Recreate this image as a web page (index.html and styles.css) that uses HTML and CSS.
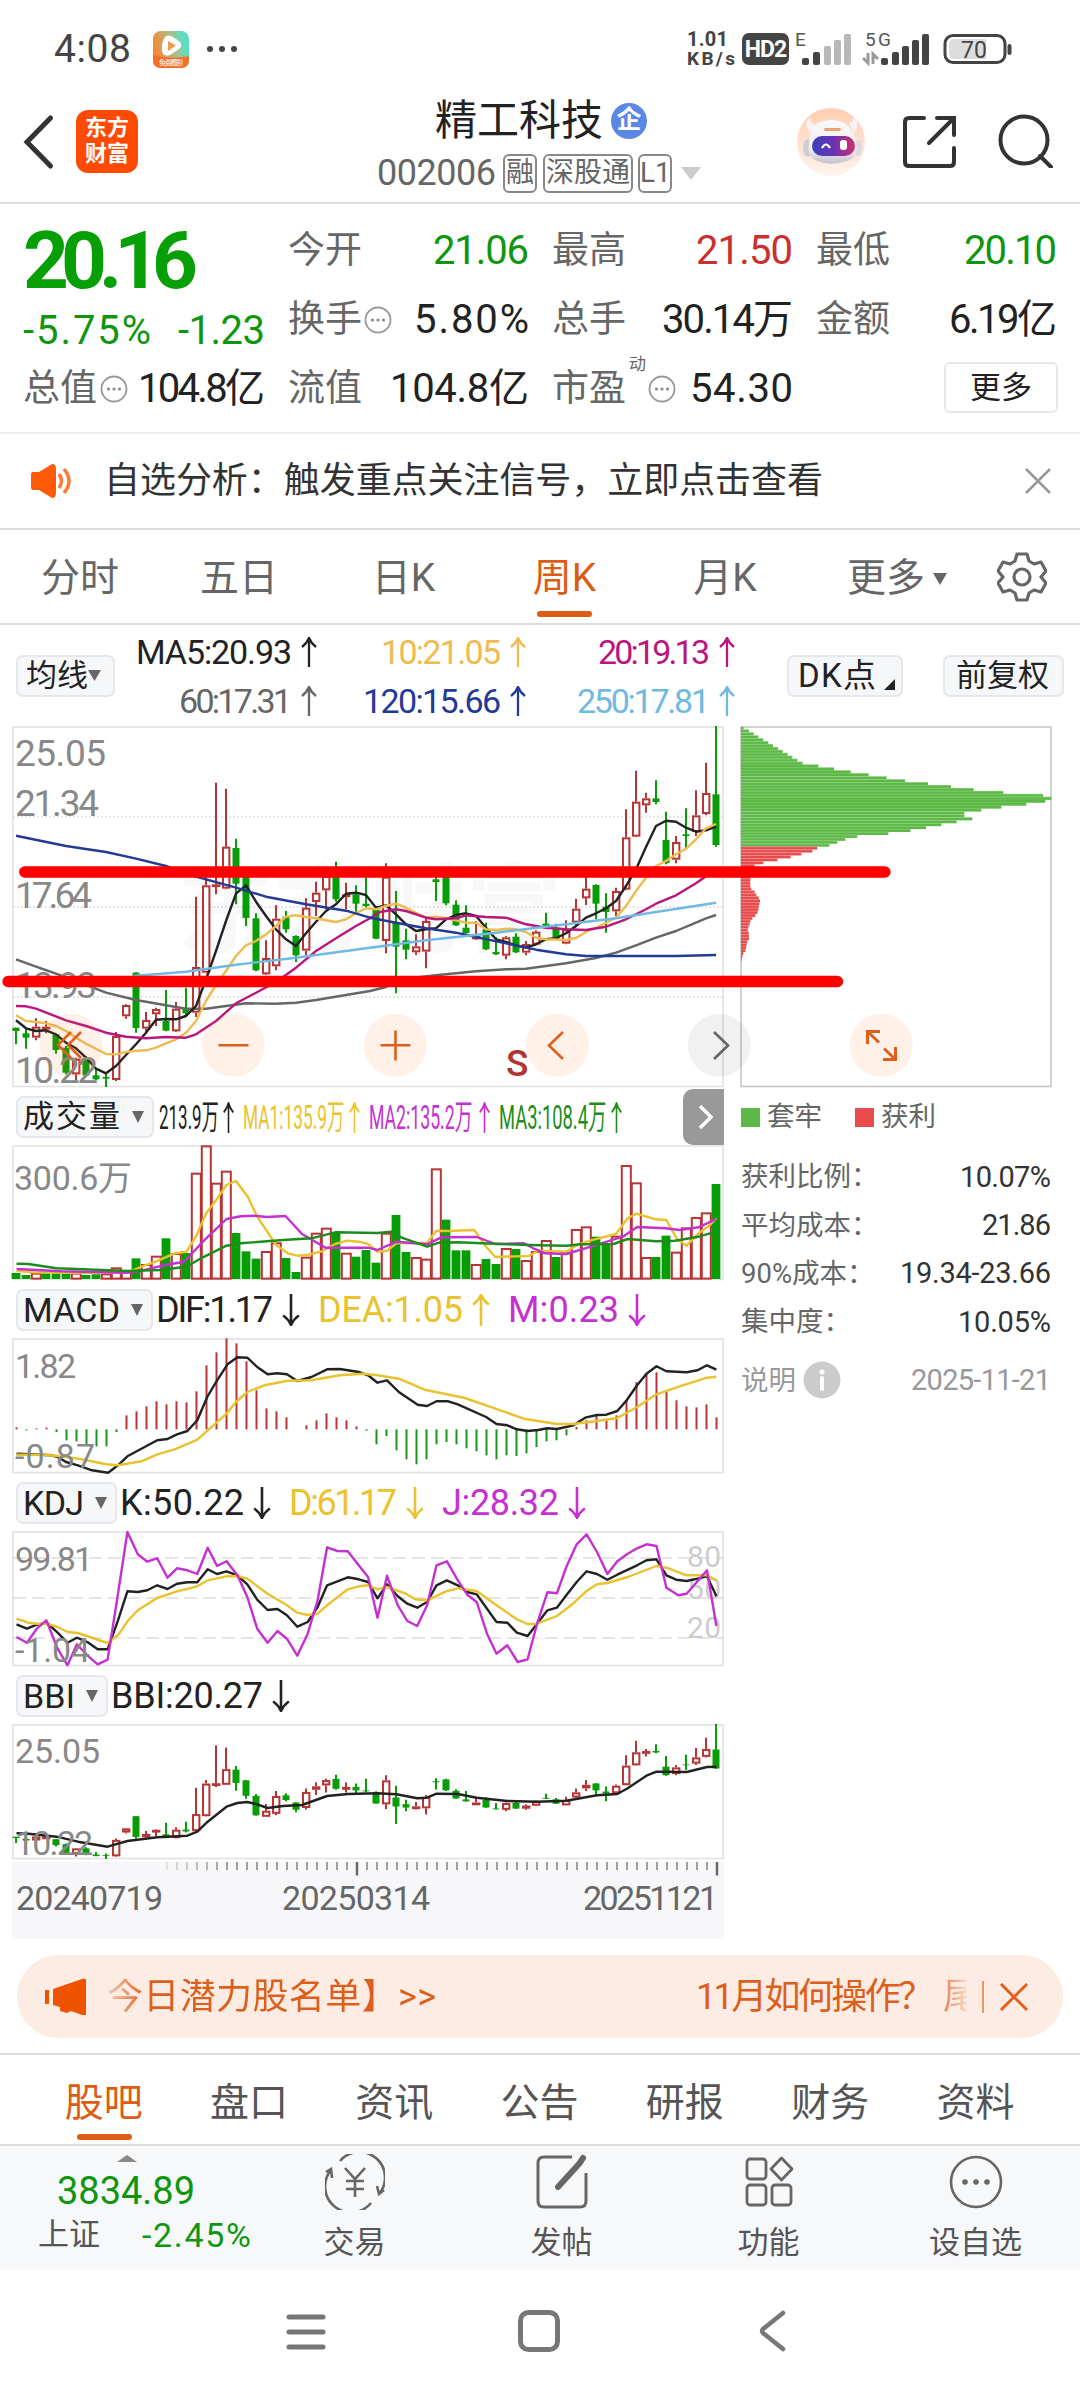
FILE: index.html
```html
<!DOCTYPE html>
<html lang="zh-CN">
<head>
<meta charset="utf-8">
<title>精工科技 002006</title>
<link rel="stylesheet" href="styles.css">
</head>
<body>
<svg class="defs" width="0" height="0">
  <symbol id="up" viewBox="0 0 16 30" preserveAspectRatio="none"><path d="M8 30V1M1 10Q6 6 8 1Q10 6 15 10" fill="none" stroke="currentColor" stroke-width="2.300"/></symbol>
  <symbol id="down" viewBox="0 0 16 30" preserveAspectRatio="none"><path d="M8 0V29M1 20Q6 24 8 29Q10 24 15 20" fill="none" stroke="currentColor" stroke-width="2.300"/></symbol>
  <symbol id="dots" viewBox="0 0 28 28"><circle cx="14" cy="14" r="12.5" fill="none" stroke="#999" stroke-width="1.8"/><g fill="#888"><circle cx="8.5" cy="14" r="1.6"/><circle cx="14" cy="14" r="1.6"/><circle cx="19.5" cy="14" r="1.6"/></g></symbol>
</svg>

<header class="status">
  <span class="clock" data-w="77">4:08</span>
  <svg class="app" width="36" height="37" viewBox="0 0 36 37"><defs><linearGradient id="ag" x1="0" y1=".6" x2="1" y2=".3"><stop offset=".1" stop-color="#f5893c"/><stop offset=".6" stop-color="#a9c08b"/><stop offset=".85" stop-color="#5fdcc0"/></linearGradient></defs><rect width="36" height="37" rx="8" fill="url(#ag)"/><path d="M0 24Q18 29 36 25V29Q36 37 28 37H8Q0 37 0 29Z" fill="#f0702a"/><path d="M12 6Q15 3 20 6L27 11Q30 15 26 18L17 24Q10 26 9 20Q8 12 12 6Z" fill="#fff"/><path d="M15 10L23 14.500L15 20Z" fill="#f29a4a"/><text x="6" y="34" font-size="7" fill="#fff" textLength="24">免费看剧</text></svg>
  <svg class="more" width="32" height="8"><g fill="#444"><circle cx="4" cy="4" r="3"/><circle cx="16" cy="4" r="3"/><circle cx="28" cy="4" r="3"/></g></svg>
  <div class="speed"><span data-w="41">1.01</span><span class="kbs" data-w="48">KB/s</span></div>
  <span class="hd">HD2</span>
  <svg class="signals" width="220" height="60" viewBox="795 19 220 60">
    <text x="795" y="46" font-size="19" fill="#555">E</text>
    <g fill="#444"><rect x="802" y="58" width="7" height="7" rx="2"/><rect x="813" y="52" width="7" height="13" rx="2"/></g>
    <g fill="#b8b8b8"><rect x="824" y="46" width="7" height="19" rx="2"/><rect x="834" y="40" width="7" height="25" rx="2"/><rect x="844" y="34" width="7" height="31" rx="2"/></g>
    <text x="865" y="46" font-size="19" fill="#555" textLength="26">5G</text>
    <path d="M863 58L868 63V53M873 64V54L878 59" stroke="#999" stroke-width="3" fill="none"/>
    <g fill="#444"><rect x="881" y="58" width="7" height="7" rx="2"/><rect x="892" y="52" width="7" height="13" rx="2"/><rect x="902" y="46" width="7" height="19" rx="2"/><rect x="912" y="40" width="7" height="25" rx="2"/><rect x="922" y="34" width="7" height="31" rx="2"/></g>
    <rect x="945" y="35.500" width="60" height="27" rx="8" fill="#fff" stroke="#444" stroke-width="3"/><path d="M954 39H986V59H954Q949 59 949 54V44Q949 39 954 39Z" fill="#ddd"/><rect x="1007.500" y="44" width="4" height="11" rx="2" fill="#444"/>
    <text x="961" y="58" font-size="23" fill="#444" textLength="26">70</text>
  </svg>
</header>

<nav class="title-bar">
  <svg class="back" width="32" height="56"><path d="M27.500 4L4 28L27.500 52" fill="none" stroke="#333" stroke-width="5" stroke-linecap="round"/></svg>
  <div class="logo">东方<br>财富</div>
  <div class="stock">
    <div class="name"><span data-w="168">精工科技</span><i>企</i></div>
    <div class="code"><span data-w="119">002006</span><b class="t1">融</b><b class="t2">深股通</b><b class="t3">L1</b><svg width="20" height="14"><path d="M0 1H20L10 14Z" fill="#ccc"/></svg></div>
  </div>
  <svg class="robot" width="68" height="68" viewBox="0 0 68 68"><defs><linearGradient id="rg" x2="0" y2="1"><stop stop-color="#ffcdb2"/><stop offset="1" stop-color="#fff4ee"/></linearGradient><linearGradient id="hg" x2="0" y2="1"><stop stop-color="#fbfafb"/><stop offset=".7" stop-color="#eceaf0"/><stop offset="1" stop-color="#c3bfcc"/></linearGradient><linearGradient id="fg"><stop stop-color="#3b40b8"/><stop offset=".5" stop-color="#6a33b4"/><stop offset="1" stop-color="#d02f6b"/></linearGradient></defs><circle cx="34" cy="34" r="34" fill="url(#rg)"/><path d="M12 24Q6 14 13 10Q13 16 20 17ZM52 15Q57 14 56 8Q64 15 57 25Z" fill="#f6f3f4"/><ellipse cx="11" cy="40" rx="5" ry="9" fill="#cfccd5"/><ellipse cx="61" cy="40" rx="4" ry="8" fill="#dcd9e0"/><path d="M12 36Q12 12 34 12Q56 12 59 36Q62 52 46 54Q32 58 20 53Q10 49 12 36Z" fill="url(#hg)"/><rect x="15" y="28" width="43" height="20" rx="10" fill="url(#fg)"/><path d="M25 40Q29 33 33 40" stroke="#fff" stroke-width="2.200" fill="none"/><rect x="43" y="32" width="7" height="10" rx="3" fill="#fff"/><rect x="27" y="20" width="17" height="3" rx="1.500" fill="#e8a36e"/></svg>
  <svg class="share" width="54" height="54"><path d="M21 3H6Q2 3 2 7V47Q2 51 6 51H47Q51 51 51 47V33M34 3H51V20M51 3L26 28" fill="none" stroke="#333" stroke-width="4" stroke-linecap="round"/></svg>
  <svg class="search" width="56" height="54"><circle cx="26" cy="26" r="23.500" fill="none" stroke="#333" stroke-width="4"/><path d="M42 42L53 53" stroke="#333" stroke-width="4" stroke-linecap="round"/></svg>
</nav>

<section class="quote">
  <div class="col c1">
    <div class="price"><span data-w="175">20.16</span></div>
    <div class="row chg green"><span data-w="128">-5.75%</span><span data-w="87">-1.23</span></div>
    <div class="row last"><label>总值</label><svg class="dot"><use href="#dots"/></svg><span data-w="127">104.8亿</span></div>
  </div>
  <div class="col c2">
    <div class="row"><label>今开</label><span class="green" data-w="96">21.06</span></div>
    <div class="row"><label>换手</label><svg class="dot"><use href="#dots"/></svg><span data-w="115">5.80%</span></div>
    <div class="row"><label>流值</label><span data-w="139">104.8亿</span></div>
  </div>
  <div class="col c3">
    <div class="row"><label>最高</label><span class="red" data-w="97">21.50</span></div>
    <div class="row"><label>总手</label><span data-w="131">30.14万</span></div>
    <div class="row"><label>市盈</label><sup>动</sup><svg class="dot"><use href="#dots"/></svg><span data-w="103">54.30</span></div>
  </div>
  <div class="col c4">
    <div class="row"><label>最低</label><span class="green" data-w="93">20.10</span></div>
    <div class="row"><label>金额</label><span data-w="108">6.19亿</span></div>
    <button>更多</button>
  </div>
</section>

<section class="notice">
  <svg width="42" height="34"><path d="M2 8H8L21 0Q25 0 25 5V29Q25 34 21 34L8 26H2Q0 26 0 23V11Q0 8 2 8Z" fill="#ff5a08"/><path d="M28 10Q33 17 28 24M33 5Q43 17 33 29" fill="none" stroke="#ff7a35" stroke-width="3.500"/></svg>
  <span class="msg" data-w="719">自选分析：触发重点关注信号，立即点击查看</span>
  <svg width="28" height="28"><path d="M2 2L26 26M26 2L2 26" stroke="#999" stroke-width="2.500"/></svg>
</section>

<nav class="periods">
  <a>分时</a><a>五日</a><a>日K</a><a class="on">周K</a><a>月K</a><a class="dd">更多<svg width="14" height="12"><path d="M0 0H14L7 12Z" fill="#666"/></svg></a>
  <svg class="gear" width="50" height="50" viewBox="0 0 50 50"><path d="M20 2H30L32 9L37 12L44 10L49 19L44 25L49 31L44 40L37 38L32 41L30 48H20L18 41L13 38L6 40L1 31L6 25L1 19L6 10L13 12L18 9Z" fill="none" stroke="#666" stroke-width="3.200" stroke-linejoin="round"/><circle cx="25" cy="25" r="8" fill="none" stroke="#666" stroke-width="3.200"/></svg>
</nav>

<section class="ma">
  <div class="chip">均线<svg width="13" height="11"><path d="M0 0H13L6.500 11Z" fill="#666"/></svg></div>
  <div class="mas">
    <span class="k"><em data-w="156">MA5:20.93</em><svg class="ar"><use href="#up"/></svg></span>
    <span class="y"><em data-w="120">10:21.05</em><svg class="ar"><use href="#up"/></svg></span>
    <span class="m"><em data-w="112">20:19.13</em><svg class="ar"><use href="#up"/></svg></span>
    <span class="g"><em data-w="113">60:17.31</em><svg class="ar"><use href="#up"/></svg></span>
    <span class="b"><em data-w="138">120:15.66</em><svg class="ar"><use href="#up"/></svg></span>
    <span class="c"><em data-w="133">250:17.81</em><svg class="ar"><use href="#up"/></svg></span>
  </div>
  <div class="chip dk"><span data-w="78">DK点</span><svg width="11" height="11"><path d="M11 0V11H0Z" fill="#222"/></svg></div>
  <div class="chip fq">前复权</div>
</section>

<section class="charts">
  <div class="left">
    <svg id="kline" width="712" height="361"></svg>
    <div class="ind">
      <div class="chip w138"><span data-w="97">成交量</span><i class="tri"></i></div>
      <svg class="volinfo" width="475" height="40">
        <g font-size="34"><text transform="translate(3 32) scale(.5 1)" fill="#222">213.9万</text><text transform="translate(87 32) scale(.51 1)" fill="#eac22e">MA1:135.9万</text><text transform="translate(213 32) scale(.52 1)" fill="#c531d0">MA2:135.2万</text><text transform="translate(343 32) scale(.54 1)" fill="#1c8d1c">MA3:108.4万</text></g>
        <use href="#up" color="#222" x="67" y="5" width="11" height="31"/><use href="#up" color="#eac22e" x="193" y="5" width="11" height="31"/><use href="#up" color="#c531d0" x="323" y="5" width="11" height="31"/><use href="#up" color="#1c8d1c" x="455" y="5" width="11" height="31"/>
      </svg>
      <div class="next"><svg width="16" height="26"><path d="M2 2L13 13L2 24" fill="none" stroke="#fff" stroke-width="3.500"/></svg></div>
    </div>
    <svg id="volume" width="712" height="135"></svg>
    <div class="ind"><div class="chip en w137"><span data-w="97">MACD</span><i class="tri"></i></div><span class="v k"><em data-w="117">DIF:1.17</em><svg class="ar"><use href="#down"/></svg></span><span class="v y2 s26"><em data-w="145">DEA:1.05</em><svg class="ar"><use href="#up"/></svg></span><span class="v p s20"><em data-w="111">M:0.23</em><svg class="ar"><use href="#down"/></svg></span></div>
    <svg id="macd" width="712" height="135"></svg>
    <div class="ind"><div class="chip en w101"><span data-w="61">KDJ</span><i class="tri"></i></div><span class="v k"><em data-w="124">K:50.22</em><svg class="ar"><use href="#down"/></svg></span><span class="v y2 s20"><em data-w="108">D:61.17</em><svg class="ar"><use href="#down"/></svg></span><span class="v p s20"><em data-w="117">J:28.32</em><svg class="ar"><use href="#down"/></svg></span></div>
    <svg id="kdj" width="712" height="135"></svg>
    <div class="ind"><div class="chip en w91"><span data-w="52">BBI</span><i class="tri"></i></div><span class="v k"><em data-w="152">BBI:20.27</em><svg class="ar"><use href="#down"/></svg></span></div>
    <svg id="bbi" width="712" height="135"></svg>
    <div class="axis"><svg id="ticks" width="712" height="16"></svg><div class="dates"><span data-w="147">20240719</span><span data-w="148">20250314</span><span data-w="135">20251121</span></div></div>
  </div>
  <aside class="chips">
    <svg id="dist" width="313" height="361"></svg>
    <div class="legend"><i class="gsq"></i>套牢<i class="rsq"></i>获利</div>
    <dl>
      <div><dt>获利比例：</dt><dd data-w="91">10.07%</dd></div>
      <div><dt>平均成本：</dt><dd data-w="69">21.86</dd></div>
      <div><dt>90%成本：</dt><dd data-w="151">19.34-23.66</dd></div>
      <div><dt>集中度：</dt><dd data-w="93">10.05%</dd></div>
      <div class="note"><dt>说明<svg width="38" height="38"><circle cx="19" cy="19" r="18.500" fill="#ccc"/><circle cx="19" cy="11" r="2.500" fill="#fff"/><path d="M19 17V28" stroke="#fff" stroke-width="4" stroke-linecap="round"/></svg></dt><dd data-w="140">2025-11-21</dd></div>
    </dl>
  </aside>
  <svg class="overlay" width="1080" height="362" viewBox="0 726 1080 362">
    <g fill="#fb6a1e" fill-opacity=".1"><circle cx="71.300" cy="1045.300" r="31.500"/><circle cx="233.300" cy="1045.300" r="31.500"/><circle cx="395.300" cy="1045.300" r="31.500"/><circle cx="557.300" cy="1045.300" r="31.500"/><circle cx="881.300" cy="1045.300" r="31.500"/></g>
    <circle cx="719.300" cy="1045.300" r="31.500" fill="#000" fill-opacity=".055"/>
    <g fill="none" stroke="#dd5f1c" stroke-width="2.600"><path d="M71 1032L58 1045L71 1058M81 1032L68 1045L81 1058"/><path d="M218.500 1045.300H248.500M380.500 1045.300H410.500M395.500 1030.500V1060.500"/><path d="M563 1032L549 1045.500L563 1059"/><path d="M880 1031.500H867.500V1044M867.500 1031.500L879 1042.500M883 1059.500H895.500V1047M895.500 1059.500L884 1048.500" stroke-width="3"/></g>
    <path d="M714 1032L728 1045.500L714 1059" fill="none" stroke="#666" stroke-width="2.600"/>
    <text x="506" y="1076" font-size="37" font-weight="500" fill="#b23332">S</text>
    <path d="M24.700 872H885M8 981.500H837.500" stroke="#f00" stroke-width="11.300" stroke-linecap="round"/>
  </svg>
</section>

<section class="banner">
  <svg width="42" height="36"><path d="M0 11H4V25H0ZM8 10L37 0H41V36H37L26 32L22 34L15 32V28L8 26Z" fill="#ef5300"/></svg>
  <span class="b1" data-w="329">今日潜力股名单】&gt;&gt;</span>
  <span class="b2" data-w="238">11月如何操作？</span><span class="b3">尾</span>
  <i class="sep"></i>
  <svg width="30" height="30"><path d="M2 2L28 28M28 2L2 28" stroke="#e2601c" stroke-width="3"/></svg>
</section>

<nav class="tabs"><a class="on">股吧</a><a>盘口</a><a>资讯</a><a>公告</a><a>研报</a><a>财务</a><a>资料</a></nav>

<footer class="bar">
  <div class="index"><svg width="20" height="7"><path d="M0 7L10 0L20 7Z" fill="#888"/></svg><strong data-w="138">3834.89</strong><p><label>上证</label><span data-w="109">-2.45%</span></p></div>
  <a><svg width="60" height="56" viewBox="0 0 60 56" fill="none" stroke="#666" stroke-width="2.600"><path d="M15 7A25 25 0 0 1 54 40M46 49A25 25 0 0 1 6 16M1 18L6 15L7 24M59 36L54 40L52 32M20 14L30 25L40 14M30 25V43M21 27H39M21 35H39"/></svg>交易</a>
  <a><svg width="52" height="56" viewBox="0 0 52 56" fill="none" stroke="#666" stroke-width="3"><path d="M36 3H8Q2 3 2 9V47Q2 53 8 53H44Q50 53 50 47V19"/><path d="M43 10L47 4M22 33L42 11" stroke-width="6" stroke-linecap="round"/></svg>发帖</a>
  <a><svg width="50" height="56" viewBox="0 0 50 56" fill="none" stroke="#666" stroke-width="2.800"><rect x="3" y="5" width="19" height="20" rx="3"/><rect x="3" y="31" width="19" height="20" rx="3"/><rect x="28" y="31" width="19" height="20" rx="3"/><path d="M37.500 4L48 15L37.500 26L27 15Z" stroke-linejoin="round"/></svg>功能</a>
  <a><svg width="54" height="56" viewBox="0 0 54 56"><circle cx="27" cy="28" r="25" fill="none" stroke="#666" stroke-width="2.600"/><g fill="#666"><circle cx="16" cy="28" r="2.800"/><circle cx="27" cy="28" r="2.800"/><circle cx="38" cy="28" r="2.800"/></g></svg>设自选</a>
</footer>

<div class="sysnav">
  <svg width="40" height="36"><path d="M3 3H37M3 18H37M3 33H37" stroke="#777" stroke-width="5" stroke-linecap="round"/></svg>
  <svg width="42" height="42"><rect x="2.500" y="2.500" width="37" height="37" rx="8" fill="none" stroke="#777" stroke-width="5"/></svg>
  <svg width="28" height="42"><path d="M24 3L4 19Q2 21 4 23L24 39" fill="none" stroke="#777" stroke-width="4.500" stroke-linecap="round"/></svg>
</div>
<script src="charts.js"></script>
</body>
</html>
```
FILE: styles.css
```css
*{box-sizing:border-box}
body{margin:0;width:1080px;height:2400px;overflow:hidden;background:#fff;color:#222;font-family:Roboto,"Noto Sans CJK SC",sans-serif;line-height:1}
svg{display:block;flex:none}
svg.defs{position:absolute}
svg text{font-family:Roboto,"Noto Sans CJK SC",sans-serif}
span,label,dt,dd,a,em,b,strong{white-space:nowrap}
[data-w]{display:inline-block;flex:none}
em,i{font-style:normal}
.green{color:#0f960f!important}
.red{color:#c93030!important}

.status{height:98px;display:flex;align-items:center;padding-left:54px}
.clock{font-size:39px;color:#444}
.app{margin-left:22px}
.more{margin-left:17px}
.speed{margin-left:449px;display:flex;flex-direction:column;font-size:20px;font-weight:700;line-height:20px;color:#444;width:48px;align-items:flex-start}
.kbs{font-size:19px}
.hd{margin-left:7px;width:47px;height:32px;border-radius:7px;background:#444;color:#fff;font-size:23px;font-weight:700;line-height:33px;text-align:center;letter-spacing:-1px}
.signals{margin-left:6px}

.title-bar{height:106px;display:flex;align-items:flex-start;border-bottom:2px solid #ddd}
.back{margin:16px 0 0 23px}
.logo{margin:12px 0 0 21px;width:62px;height:63px;border-radius:12px;background:#ff4a06;color:#fff;font-size:22px;font-weight:700;line-height:26px;text-align:center;padding-top:5px}
.stock{margin-left:239px;width:330px}
.name{display:flex;align-items:center;height:46px;padding-left:58px;font-size:42px}
.name i{width:36px;height:36px;margin-left:8px;border-radius:50%;background:#5b87e5;color:#fff;font-size:25px;font-weight:700;line-height:34px;text-align:center}
.code{display:flex;align-items:center;height:40px;margin-top:9px;font-size:36px;color:#666}
.code b{height:39px;border:2px solid #888;border-radius:6px;font-weight:400;font-size:28px;line-height:34px;text-align:center}
.t1{width:34px;margin-left:7px}.t2{width:90px;margin-left:6px}.t3{width:34px;margin-left:5px}
.code svg{margin-left:9px}
.robot{margin:10px 0 0 90px}
.share{margin:17px 0 0 38px}
.search{margin:16px 0 0 41px}

.quote{height:230px;display:flex;border-bottom:2px solid #eee;font-size:40px}
.col{display:flex;flex-direction:column;padding-top:12px}
.row{height:69px;display:flex;align-items:center}
.row label{font-size:37px;color:#666;margin-right:auto}
.row .dot{width:28px;height:28px}
.c1{width:265px;padding-left:23px}
.c2{width:241px;margin-left:23px}
.c3{width:241px;margin-left:23px}
.c4{width:241px;margin-left:23px}
.price{height:85px;font-size:80px;font-weight:700;line-height:90px;color:#06a006}
.chg{height:60px;justify-content:space-between;align-items:center;padding-bottom:1px}
.last{margin-top:-7px}
.c2 .row .dot{margin:0 auto 0 2px}
.c1 .row .dot{margin:0 auto 0 3px}
.last label,.c2 .row:nth-child(2) label,.c3 .row:nth-child(3) label{margin-right:0}
.c3 sup{font-size:17px;margin:-48px 2px 0 3px;color:#666}
.c3 .dot{margin-right:auto}
.c4 button{margin:8px -1px 0 auto;width:114px;height:51px;background:#fff;border:2px solid #e8e8e8;border-radius:6px;font:31px/44px Roboto,"Noto Sans CJK SC",sans-serif;padding:0;color:#222}

.notice{height:96px;display:flex;align-items:center;padding:0 28px 0 31px;border-bottom:2px solid #ddd}
.msg{font-size:36px;margin-left:31px;margin-right:auto;color:#333}

.periods{height:95px;display:grid;grid-template-columns:160px 158px 171px 151px 170px 174px 1fr;align-items:center;border-bottom:2px solid #ddd;font-size:39px;color:#666}
.periods a{justify-self:center;position:relative;top:2px}
.periods .on,.tabs .on{color:#dd5c14}
.periods .on::after,.tabs .on::after{content:"";position:absolute;left:50%;margin-left:-27px;width:55px;height:6px;border-radius:3px;background:#dd5c14}
.periods .on::after{bottom:-19px}
.dd{display:flex;align-items:center;gap:8px}
.gear{margin-left:13px}

.ma{height:101px;display:flex;align-items:center;padding-left:16px}
.chip{height:42px;border:2px solid #e4e7ec;border-radius:7px;background:#f6f7f9;font-size:31px;display:flex;align-items:center;color:#222;white-space:nowrap;flex:none}
.ma .chip{width:99px;padding-left:8px;font-size:31px}
.mas{width:615px;margin:1px 0 0 5px;display:grid;grid-template-columns:197px 209px 209px;row-gap:18px;font-size:34px}
.mas span{display:flex;justify-content:flex-end;align-items:center;height:31px}
.ar{width:16px;height:30px;margin-left:9px}
.k{color:#222}.y{color:#efbb4f}.m{color:#ba167d}.g{color:#666}.b{color:#233a96}.c{color:#6fb9e2}
.y2{color:#eac22e}.p{color:#c531d0}
.ma .dk{width:116px;margin-left:52px;padding-left:9px;position:relative}
.dk span{font-size:33px}
.dk svg{margin:18px 0 0 8px}
.ma .fq{width:121px;margin-left:40px;padding-left:11px}

.charts{position:relative;display:grid;grid-template-columns:712px 313px;column-gap:16px;padding-left:12px}
.left svg,.chips svg{overflow:visible}
.ind{height:58px;display:flex;align-items:center;padding:1px 0 0 4px}
.ind .chip{padding:0 8px 0 5px;justify-content:space-between}
.ind .en{font-size:34px}
.w138{width:138px}.w137{width:137px}.w101{width:101px}.w91{width:92px}
.tri{border:6px solid transparent;border-top:12px solid #666;border-bottom:0}
.v{display:flex;align-items:center;font-size:36px;margin-left:3px}
.ind .s26{margin-left:18px}.ind .s20{margin-left:18px}
.v .ar{width:18px;height:32px;margin-left:9px}
.next{width:41px;height:56px;margin-left:auto;background:#999;border-radius:10px 0 0 10px;display:flex;align-items:center;padding-left:15px}
.volinfo{margin-left:2px}
.axis{height:77px;margin-top:3px;background:#f7f7f9}
.dates{display:grid;grid-template-columns:266px 301px 135px;justify-items:start;padding-left:4px;font-size:34px;color:#666;line-height:40px}
.chips{color:#666;font-size:27.500px}
.legend{display:flex;align-items:center;height:60px}
.legend i{width:19px;height:19px;margin:0 7px 0 1px;background:#5cb946}
.legend .rsq{margin-left:33px;background:#e84b4b}
.chips dl{margin:6px 0 0;padding:0 2px 0 1px}
.chips dl div{display:flex;justify-content:space-between;align-items:center;height:48.300px}
.chips dt{display:flex;align-items:center}
.chips dt svg{margin-left:7px}
.chips dd{margin:0;color:#333;font-size:29px}
.chips .note{margin-top:10px;color:#999}
.chips .note dd{color:#999}
.overlay{position:absolute;left:0;top:0}

.banner{margin:16px 17px 0;height:83px;border-radius:42px;background:#fcece3;display:flex;align-items:center;padding:0 34px 0 28px;font-size:36px;color:#dd5f1c}
.b1{margin-left:20px;margin-right:auto}
.b2{margin-right:9px}
.b1{-webkit-mask-image:linear-gradient(90deg,rgba(0,0,0,.25),#000 40px)}
.b3{width:36px;margin-right:-12px;-webkit-mask-image:linear-gradient(90deg,rgba(0,0,0,.75),rgba(0,0,0,.15) 23px,transparent 24px)}
.sep{width:2px;height:32px;background:#e8966c;margin:0 15px}

.tabs{margin-top:15px;height:93px;border-top:2px solid #ddd;border-bottom:2px solid #ddd;display:grid;grid-template-columns:repeat(7,145.300px);padding-left:31px;align-items:center;text-align:center;font-size:39px;color:#555}
.tabs a{position:relative;top:4px}
.tabs .on::after{bottom:-17px}

.bar{height:124px;background:#f7f8fa;display:grid;grid-template-columns:251px repeat(4,207px);color:#555;font-size:31px}
.index{padding:9px 0 0 38px;display:flex;flex-direction:column;align-items:flex-start}
.index svg{margin-left:79px}
.index strong{font-size:38px;font-weight:400;color:#0f960f;margin:10px 0 0 19px}
.index p{margin:7px 0 0;display:flex;justify-content:space-between;align-items:center;font-size:34px;color:#0f960f;width:213px}
.index label{font-size:31px;color:#555;line-height:36px}
.bar a{display:flex;flex-direction:column;align-items:center;padding-top:8px;gap:17px}
.sysnav{height:130px;display:grid;grid-template-columns:40px 42px 28px;column-gap:192px;padding:40px 0 0 286px;align-items:start}
.sysnav svg:first-child{margin-top:4px}
.sysnav svg:nth-child(3){margin-left:7px}
```
FILE: charts.js
```js
// Stretch or tighten letter-spacing so numeric labels keep fixed widths.
document.querySelectorAll('[data-w]').forEach(function (el) {
  var n = el.textContent.length - 1;
  var s = (el.dataset.w - el.getBoundingClientRect().width) / n;
  el.style.letterSpacing = s + 'px';
  el.style.width = el.dataset.w + 'px';
});

var RED = '#b73535', GREEN = '#069d06';
function rect(x, y, w, h, fill, stroke, sw) {
  return '<rect x="' + x + '" y="' + y + '" width="' + w + '" height="' + Math.max(h, .8) + '" fill="' + fill + '"' + (stroke ? ' stroke="' + stroke + '" stroke-width="' + (sw || 2) + '"' : '') + '/>';
}
function seg(x1, y1, x2, y2, c, w, extra) {
  return '<path d="M' + x1 + ' ' + y1 + 'L' + x2 + ' ' + y2 + '" stroke="' + c + '" stroke-width="' + w + '" ' + (extra || '') + '/>';
}
function label(x, y, t, size, w, c) {
  return '<text x="' + x + '" y="' + y + '" font-size="' + size + '" fill="' + (c || '#888') + '" textLength="' + w + '">' + t + '</text>';
}
// Polyline from "x,y" pairs, scaled into the pane.
function curve(pts, ox, sx, oy, sy, c, w) {
  var p = pts.trim().split(/\s+/).map(function (q) {
    q = q.split(',');
    return ((q[0] - ox) * sx).toFixed(1) + ',' + ((q[1] - oy) * sy).toFixed(1);
  }).join(' ');
  return '<polyline points="' + p + '" fill="none" stroke="' + c + '" stroke-width="' + w + '" stroke-linejoin="round"/>';
}
function frame(h) { return '<rect x="1" y="1" width="710" height="' + (h - 1.5) + '" fill="none" stroke="#e2e2e2" stroke-width="1.6"/>'; }
function draw(id, html) { document.getElementById(id).innerHTML = html; }

// colour, high, body top, body bottom, low
var candles = ('g955,955,965,1005 g958,972,985,1018 r927,952,985,993 r935,952,960,972 g975,975,1022,1033 g1010,1015,1090,1095 r1045,1048,1095,1113 g1040,1048,1098,1103 g1078,1098,1110,1112 g1090,1103,1108,1133 ' +
'r968,980,1112,1115 r885,887,921,928 g788,790,956,970 r908,932,958,970 r895,899,915,950 g842,935,964,966 r878,898,966,968 g835,898,912,920 r562,773,910,923 r500,528,790,792 ' +
'r220,525,533,555 r238,412,538,540 g388,416,523,585 g500,502,626,650 g612,627,783,786 r693,746,795,797 r588,628,771,783 g605,622,660,670 g678,680,738,758 r567,595,724,737 ' +
'r517,550,578,620 r490,500,543,600 g457,490,570,577 r520,555,562,600 g528,555,583,607 g490,583,590,597 g590,600,688,690 r462,502,695,732 g545,640,712,852 g658,693,721,750 ' +
'r675,711,729,737 r620,635,727,777 g485,510,518,575 g490,495,582,588 g573,586,648,650 g588,655,671,673 r635,680,690,692 g640,660,720,722 g683,728,735,737 r680,684,739,750 ' +
'g672,682,729,731 r695,704,730,738 r663,667,706,708 g610,643,650,652 g643,655,690,692 r633,660,703,705 r568,598,640,650 r500,538,567,587 g525,527,583,630 g552,592,608,670 ' +
'r535,545,606,620 r300,384,541,543 r184,277,382,384 r250,267,288,310 g213,267,278,285 g307,392,461,465 r380,398,451,462 g297,375,380,420 r243,318,368,380 r160,251,314,318 g50,255,407,412').split(' ');

function candlesticks(sy) {
  return candles.map(function (c, i) {
    var v = c.slice(1).split(',').map(function (n) { return (n - 50) * sy; });
    var x = 4 + 10 * i, col = c[0] === 'g' ? GREEN : RED;
    if (c[0] === 'g') return seg(x, v[0], x, v[3], col, 2) + rect(x - 3.5, v[1], 7, v[2] - v[1], col);
    return seg(x, v[0], x, v[1], col, 2) + seg(x, v[2], x, v[3], col, 2) + rect(x - 3, v[1] + 1, 6.4, v[2] - v[1] - 2, '#fff', col);
  }).join('');
}
var T = 1 / 3;
function ma(p, c) { return curve(p, 36, T, 50, T, c, 2.4); }
var grid = [91, 181, 271].map(function (y) { return seg(1, y, 711, y, '#ccc', 1, 'stroke-dasharray="2 2"'); }).join('');
draw('kline', '<text x="165" y="218" font-size="96" font-weight="700" fill="#f8f8f8" textLength="385">东方财富</text>' + frame(361) + grid + candlesticks(T) +
ma('48,750 108,772 168,793 228,815 318,850 408,872 498,888 558,898 618,898 678,890 738,882 828,883 888,880 948,872 1110,845 1158,833 1218,808 1308,798 1428,786 1518,780 1578,778 1698,762 1788,746 1848,730 1908,708 1968,685 2028,665 2088,640 2118,627 2148,617', '#666') +
ma('48,933 78,957 108,965 138,963 168,975 198,1000 228,1017 258,1045 288,1078 318,1092 348,1070 378,1037 408,1005 438,970 468,931 498,929 528,930 558,920 588,890 618,810 648,725 678,635 708,553 738,528 768,577 798,620 828,660 858,690 888,710 918,672 948,637 978,605 1008,585 1038,553 1068,550 1098,557 1128,595 1158,588 1188,615 1218,645 1248,665 1278,660 1308,657 1338,630 1368,617 1398,612 1428,620 1458,655 1488,690 1518,698 1548,708 1578,715 1608,705 1638,690 1668,687 1698,672 1728,650 1758,625 1788,612 1818,597 1848,575 1878,530 1908,480 1938,413 1968,350 1998,334 2028,337 2058,355 2088,367 2118,363 2148,352', '#222') +
ma('48,918 78,935 108,938 138,942 168,950 198,965 228,985 258,1003 288,1018 318,1034 348,1035 378,1028 408,1024 438,1023 468,1015 498,1002 528,990 558,970 588,935 618,875 648,827 678,785 708,740 738,708 768,695 798,675 828,650 858,622 888,618 918,623 948,627 978,633 1008,638 1038,630 1068,612 1098,597 1128,600 1158,590 1188,583 1218,595 1248,610 1278,625 1308,622 1338,627 1368,633 1398,640 1428,640 1458,660 1488,662 1518,658 1548,660 1578,668 1608,685 1638,690 1698,692 1728,686 1758,668 1788,655 1818,640 1848,625 1878,590 1908,545 1938,505 1968,470 1998,455 2028,435 2058,418 2088,390 2118,357 2148,344', '#efbb4f') +
ma('48,890 78,891 108,898 198,933 258,950 318,970 378,982 438,987 498,983 558,985 588,975 648,935 708,882 768,850 828,818 888,775 948,725 1008,687 1068,650 1110,627 1140,608 1188,600 1218,605 1278,625 1308,630 1368,627 1398,618 1458,623 1518,625 1548,635 1578,645 1638,655 1698,660 1758,662 1818,652 1878,630 1938,600 1968,583 2028,558 2088,522 2148,480', '#ba167d') +
ma('48,379 198,410 318,428 408,448 498,470 588,502 708,535 798,562 918,585 1038,604 1110,625 1188,640 1278,657 1368,670 1428,683 1518,702 1608,721 1698,735 1758,740 2028,740 2148,737', '#233a96') +
ma('400,800 558,787 708,766 888,745 1110,715 1278,693 1488,670 1698,645 1848,627 1968,608 2148,580', '#6fb9e2') +
label(3, 39.5, '25.05', 37, 91) + label(3, 90, '21.34', 37, 84) + label(3, 182, '17.64', 37, 77) + label(3, 271.5, '13.93', 37, 82) + label(3, 357, '10.22', 37, 83));

var S = 1 / 2.119;
function sub(p, oy, c) { return curve(p, 25.4, S, oy, T, c, 2.4); }
var vol = 'g579 g585 r578 g580 g580 g581 r578 g585 g583 r580 r562 r572 g535 r552 r527 g475 r519 g519 r278 r196 r308 r272 g459 g514 g536 r513 r487 g534 g576 r530 r458 r443 g456 r518 g530 g510 g548 r458 g405 g516 r531 r536 r265 g419 g511 g511 r552 g537 g552 r504 g507 r540 r513 r480 g531 r515 r447 r439 g470 g490 r467 r255 r307 r531 g531 g467 r515 r442 r411 r397 g312'.split(' ');
draw('volume', frame(135) + vol.map(function (b, i) {
  var y = (b.slice(1) - 195) * T, x = 4 + 10 * i;
  return b[0] === 'g' ? rect(x - 4.4, y, 8.8, 134 - y, GREEN) : rect(x - 4.2, y + 1, 9, 132.6 - y, '#fff', RED);
}).join('') +
sub('35,572 70,577 150,578 270,578 300,560 330,545 370,520 395,515 415,470 437,400 458,360 480,315 500,303 525,350 545,410 585,495 610,520 630,527 650,525 680,515 710,492 735,482 760,485 780,492 800,515 820,512 840,490 905,488 925,452 950,453 1005,450 1030,500 1050,531 1120,528 1140,512 1200,515 1220,497 1250,482 1305,462 1330,415 1348,401 1390,418 1412,420 1435,478 1455,497 1480,460 1500,440 1518,415', 195, '#eac22e') +
sub('35,567 130,574 270,578 300,572 350,555 390,545 437,475 480,417 510,409 540,407 565,411 605,408 640,462 690,503 780,503 800,510 840,485 905,493 935,472 1010,471 1050,492 1110,490 1130,505 1155,520 1200,522 1240,505 1320,470 1350,441 1410,445 1440,450 1480,442 1518,417', 195, '#c531d0') +
sub('35,551 60,552 120,565 270,573 340,570 395,560 430,532 480,497 510,490 600,480 660,475 710,457 800,459 830,455 850,472 905,500 930,488 970,487 1060,492 1140,496 1200,497 1230,493 1300,492 1330,477 1390,484 1430,482 1480,470 1518,455', 195, '#1c8d1c') +
label(2, 44.5, '300.6万', 34, 118));

var hist = [1041,1050,1044,1042,1055,1080,1083,1092,1098,1098,1055,1005,993,978,963,972,963,966,933,855,816,774,789,843,930,984,993,1011,1047,1035,1020,999,1011,1020,1038,1051,1092,1067,1110,1137,1152,1137,1092,1085,1092,1104,1113,1125,1137,1125,1127,1119,1100,1083,1080,1065,1040,1020,1005,1015,1005,960,905,882,876,933,960,978,981,972,1011];
draw('macd', frame(135) + hist.map(function (v, i) {
  return v === 1047 ? '' : seg(4.5 + 10 * i, (1047 - 773) * T, 4.5 + 10 * i, (v - 773) * T, v < 1047 ? RED : '#1c941c', 2);
}).join('') +
sub('35,1120 110,1125 125,1132 140,1145 165,1155 195,1170 229,1177 250,1155 270,1128 333,1080 355,1076 375,1062 397,1052 418,1020 439,950 460,900 482,852 503,831 524,832 545,860 567,882 588,879 608,882 630,902 660,890 693,867 720,866 760,875 780,885 800,907 820,900 845,935 885,973 905,977 925,963 950,963 970,972 1030,1010 1052,1031 1075,1035 1095,1047 1118,1052 1140,1049 1160,1044 1180,1046 1215,1035 1240,1012 1265,1004 1285,1003 1308,992 1328,960 1350,915 1370,880 1391,858 1412,873 1455,876 1478,870 1498,855 1518,868', 773, '#222') +
sub('35,1123 100,1124 140,1130 170,1136 225,1152 250,1155 300,1143 333,1122 370,1107 418,1078 440,1050 480,1000 500,965 524,935 560,915 610,901 660,900 720,885 770,880 800,885 845,895 900,928 985,953 1050,985 1110,1015 1180,1031 1215,1031 1265,1022 1308,1013 1350,980 1391,942 1440,918 1498,892 1518,889', 773, '#eac22e') +
label(3, 39.7, '1.82', 34, 61) + label(3, 130, '-0.87', 34, 80));

draw('kdj', frame(135) + [27, 67, 107].map(function (y) { return seg(1, y, 711, y, '#ccc', 1.2, 'stroke-dasharray="13 6"'); }).join('') +
label(675, 36, '80', 30, 34, '#ccc') + label(675, 68, '50', 30, 34, '#ccc') + label(675, 107, '20', 30, 34, '#ccc') +
sub('35,462 57,475 78,463 100,458 122,487 143,517 163,502 185,515 207,537 228,537 250,450 270,363 292,365 312,360 333,345 355,356 375,340 397,336 418,336 440,297 460,311 480,303 503,315 524,342 545,388 567,419 588,416 608,435 630,469 652,455 673,410 693,345 737,321 760,327 780,335 800,384 820,342 843,378 863,400 884,412 905,395 925,345 947,330 970,345 990,365 1010,372 1032,415 1052,455 1075,457 1095,487 1118,497 1138,460 1160,420 1180,412 1200,375 1222,335 1243,303 1265,311 1287,328 1308,313 1350,285 1370,270 1391,267 1412,315 1433,328 1455,332 1478,325 1498,318 1518,378', 182, '#222') +
sub('35,445 60,457 78,460 100,460 122,470 143,485 165,488 228,518 250,495 270,453 292,420 333,383 375,363 418,348 440,330 480,318 503,317 524,325 567,370 608,405 630,427 652,434 673,430 693,405 737,357 760,348 780,345 800,357 820,350 860,370 880,387 905,390 945,363 970,354 1010,362 1052,405 1095,447 1118,461 1138,460 1180,437 1210,405 1243,362 1265,342 1287,338 1330,320 1391,287 1412,292 1455,315 1498,315 1518,330', 182, '#eac22e') +
sub('35,500 57,517 78,475 98,450 122,535 143,585 163,522 185,555 207,582 228,568 248,390 270,185 292,252 312,274 333,264 355,322 375,294 397,300 418,311 440,232 460,287 480,273 503,315 524,380 545,475 567,517 588,482 608,505 630,556 652,490 673,390 693,231 715,242 737,243 760,285 780,320 800,442 820,316 843,405 863,452 884,467 905,405 925,285 947,273 968,325 990,373 1010,395 1032,490 1052,550 1075,525 1097,575 1118,567 1138,460 1160,366 1180,369 1200,290 1222,222 1243,192 1265,245 1287,311 1308,273 1330,250 1350,234 1370,222 1391,227 1412,352 1437,375 1455,370 1478,333 1498,300 1518,467', 182, '#c531d0') +
label(3, 40, '99.81', 34, 78) + label(3, 131, '-1.04', 34, 75));

draw('bbi', frame(135) + candlesticks(134.7 / 1081) +
sub('35,1090 60,1091 120,1100 165,1115 228,1130 270,1113 333,1102 397,1097 418,1085 440,1055 480,1010 503,999 524,996 545,1003 567,1014 600,1008 640,1005 693,978 737,972 800,970 840,973 884,985 905,983 925,971 970,972 1010,983 1075,993 1138,995 1200,992 1265,976 1308,972 1330,955 1370,917 1391,905 1455,906 1498,891 1518,890', 762, '#222') +
label(3, 39.3, '25.05', 34, 85) + label(3, 131, '10.22', 34, 78));

var ticks = '';
for (var i = 15; i <= 70; i++) {
  var big = i === 34 || i === 70;
  ticks += seg(5 + 10 * i, 0, 5 + 10 * i, big ? 13.5 : 8, big ? '#666' : '#888', big ? 2.4 : 1.6, 'opacity="' + Math.min(1, (i - 13) / 8) + '"');
}
draw('ticks', ticks);

// Cost distribution, one bar per price step.
var held = [70,86,100,114,129,144,158,173,187,202,216,231,247,294,341,391,445,499,554,623,692,760,849,968,993,975,918,843,783,732,732,756,709,663,617,570,504,411,375,351,327];
var gain = [291,276,243,211,171,129,103,96,92,90,90,90,90,90,93,103,108,115,119,117,115,114,111,105,96,90,88,84,82,85,86,86,80,79,77,75,69,66,64];
draw('dist', '<rect x="1" y="1" width="310" height="359.5" fill="none" stroke="#c8c8c8" stroke-width="1.6"/>' + held.concat(gain).map(function (v, i) {
  return rect(1, i * 2.927 + .5, (v - 62) * T, 3.1, i < held.length ? '#5cb946' : '#e84b4b');
}).join('') + held.concat(gain).map(function (v, i) {
  return (i > 12 && i < 17) || (i > 24 && i < 29) ? '' : seg(1, i * 2.927 + .8, 1 + (v - 62) * T, i * 2.927 + .8, '#fff', .8, 'opacity=".3"');
}).join(''));
```
